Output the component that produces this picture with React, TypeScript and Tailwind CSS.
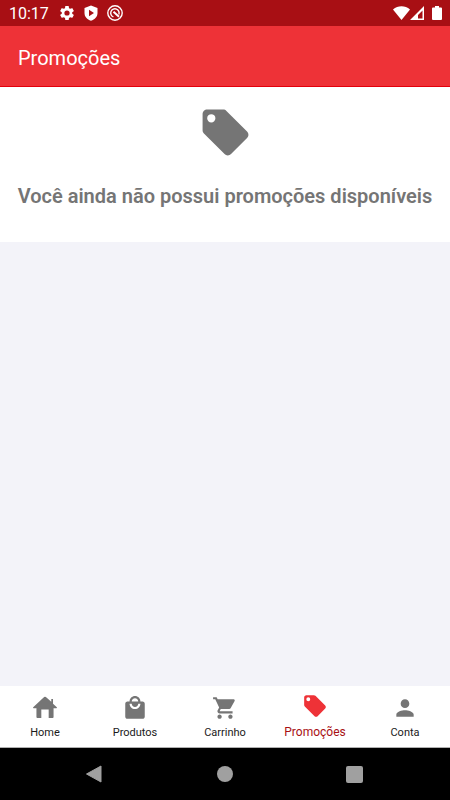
import React from "react";

type IconProps = { className?: string };

const TAG =
  "M21.41 11.58l-9-9C12.05 2.22 11.55 2 11 2H4c-1.1 0-2 .9-2 2v7c0 .55.22 1.05.59 1.42l9 9c.36.36.86.58 1.41.58.55 0 1.05-.22 1.41-.59l7-7c.37-.36.59-.86.59-1.41 0-.55-.23-1.06-.59-1.42zM5.8 7.6a1.800 1.800 0 110-3.600 1.800 1.800 0 010 3.600z";
const BAG =
  "M19 6h-2c0-2.76-2.24-5-5-5S7 3.24 7 6H5c-1.1 0-1.99.9-1.99 2L3 20c0 1.1.9 2 2 2h14c1.1 0 2-.9 2-2V8c0-1.1-.9-2-2-2zm-7-3c1.66 0 3 1.34 3 3H9c0-1.66 1.34-3 3-3zm0 10c-2.76 0-5-2.24-5-5h2c0 1.66 1.34 3 3 3s3-1.34 3-3h2c0 2.76-2.24 5-5 5z";
const CART =
  "M7 18c-1.1 0-1.99.9-1.99 2S5.9 22 7 22s2-.9 2-2-.9-2-2-2zM1 2v2h2l3.6 7.59-1.35 2.45c-.16.28-.25.61-.25.96 0 1.1.9 2 2 2h12v-2H7.42c-.14 0-.25-.11-.25-.25l.03-.12.9-1.63h7.45c.75 0 1.41-.41 1.75-1.03l3.58-6.49A1 1 0 0020 4H5.21l-.94-2H1zm16 16c-1.1 0-1.99.9-1.99 2s.89 2 1.99 2 2-.9 2-2-.9-2-2-2z";
const PERSON =
  "M12 12c2.21 0 4-1.79 4-4s-1.79-4-4-4-4 1.79-4 4 1.79 4 4 4zm0 2c-2.67 0-8 1.34-8 4v2h16v-2c0-2.66-5.33-4-8-4z";
const HOME =
  "M12.800 1.900a1.200 1.200 0 00-1.600 0L1.100 11.400c-.3.3-.1.800.3.800h2.700v8.200c0 .5.3.8.8.8h3.700V13.400h6.800v7.800h3.700c.5 0 .8-.3.8-.8v-8.200h2.700c.4 0 .6-.5.3-.8l-3.500-3.300V3.600h-1.600v2.600z";
const GEAR =
  "M19.14 12.94c.04-.3.06-.61.06-.94 0-.32-.02-.64-.07-.94l2.03-1.58a.49.49 0 00.12-.61l-1.92-3.32a.49.49 0 00-.59-.22l-2.39.96c-.5-.38-1.03-.7-1.62-.94l-.36-2.54a.48.48 0 00-.48-.41h-3.84c-.24 0-.43.17-.47.41l-.36 2.54c-.59.24-1.13.57-1.62.94l-2.39-.96a.48.48 0 00-.59.22L2.74 8.870c-.12.21-.08.47.12.61l2.030 1.580c-.05.3-.09.63-.09.94s.02.64.07.94l-2.030 1.580a.49.49 0 00-.12.61l1.920 3.320c.12.22.37.29.59.22l2.390-.96c.5.38 1.030.7 1.620.94l.36 2.540c.05.24.24.41.48.41h3.840c.24 0 .44-.17.47-.41l.36-2.540c.59-.24 1.130-.56 1.620-.94l2.390.96c.22.08.47 0 .59-.22l1.920-3.320a.49.49 0 00-.12-.61zM12 15.600A3.600 3.600 0 1112 8.400a3.600 3.600 0 010 7.200z";

function Glyph({ d, className }: { d: string } & IconProps) {
  return (
    <svg viewBox="0 0 24 24" fill="currentColor" className={className} aria-hidden="true">
      <path d={d} fillRule="evenodd" />
    </svg>
  );
}

const tabs = [
  { label: "Home", icon: HOME },
  { label: "Produtos", icon: BAG },
  { label: "Carrinho", icon: CART },
  { label: "Promoções", icon: TAG, active: true },
  { label: "Conta", icon: PERSON },
];

function StatusBar() {
  return (
    <div className="flex h-[26px] shrink-0 items-center bg-[#a80f14] pr-2 pl-[9px] text-white">
      <span className="pt-0.5 text-base leading-5">10:17</span>
      <div className="ml-2.5 flex items-center gap-2">
        <svg viewBox="1 1 22 22" className="size-4" fill="currentColor" aria-hidden="true">
          <path d={GEAR} fillRule="evenodd" />
        </svg>
        <svg viewBox="0 0 16 16" className="size-4" aria-hidden="true">
          <path fill="currentColor" fillRule="evenodd" d="M8 0.500L14.500 3v5c0 3.800-2.700 6.500-6.500 7.800C4.200 14.500 1.500 11.800 1.500 8V3zM6 4.800v6.400L11 8z" />
        </svg>
        <svg viewBox="0 0 16 16" className="size-4" fill="none" stroke="currentColor" aria-hidden="true">
          <circle cx="8" cy="8" r="7.200" strokeWidth="1.400" />
          <path d="M11.800 9.600A4.200 4.200 0 1 0 6.400 11.900" strokeWidth="1.400" />
          <path d="M6.500 6.800l5.500 4.900" strokeWidth="2" />
        </svg>
      </div>
      <div className="ml-auto flex items-center gap-1">
        <svg viewBox="0 0 17 14" className="h-3.5 w-[17px]" fill="currentColor" aria-hidden="true">
          <path d="M0 3.500C5 -.7 12 -.7 17 3.500L8.500 14z" />
        </svg>
        <svg viewBox="0 0 14 14" className="-ml-1 size-3.5" fill="currentColor" aria-hidden="true">
          <path fillRule="evenodd" d="M14 0v14H0zM12.500 4.500L8 9v3.500h4.500z" />
        </svg>
        <svg viewBox="0 0 10 14" className="ml-1 h-3.5 w-2.5" fill="currentColor" aria-hidden="true">
          <path d="M3 0h4v1.500h2a1 1 0 0 1 1 1V13a1 1 0 0 1-1 1H1a1 1 0 0 1-1-1V2.500a1 1 0 0 1 1-1h2z" />
        </svg>
      </div>
    </div>
  );
}

function TabBar() {
  return (
    <nav className="grid h-[62px] shrink-0 grid-cols-5 border-b border-[#b0b0b0] bg-white">
      {tabs.map((tab) => (
        <a
          key={tab.label}
          href="#"
          aria-current={tab.active ? "page" : undefined}
          className={
            tab.active
              ? "flex flex-col items-center gap-[5px] pt-[7px] text-xs leading-4 text-[#a80f14]"
              : "flex flex-col items-center gap-1 pt-[9px] text-[11px] leading-4 text-[#1a1a1a]"
          }
        >
          <Glyph d={tab.icon} className={tab.active ? "size-[26px] text-[#ee3237]" : "size-[26px] text-[#757575]"} />
          {tab.label}
        </a>
      ))}
    </nav>
  );
}

function SystemBar() {
  return (
    <div className="flex h-[52px] shrink-0 items-center justify-between bg-black pr-[87px] pl-[85px] text-[#a0a0a0]">
      <button type="button" aria-label="Voltar">
        <svg viewBox="0 0 18 18" className="size-[18px]" fill="currentColor" stroke="currentColor" strokeLinejoin="round" aria-hidden="true">
          <path d="M1.500 9L16 1v16z" />
        </svg>
      </button>
      <button type="button" aria-label="Início" className="size-4 rounded-full bg-current" />
      <button type="button" aria-label="Recentes" className="size-[17px] rounded-xs bg-current" />
    </div>
  );
}

export default function App() {
  return (
    <div className="flex min-h-screen flex-col bg-[#f3f3f9] font-[Roboto,sans-serif]">
      <StatusBar />
      <header className="flex h-[61px] shrink-0 items-center border-b border-[#e3000b] bg-[#ee3237] px-[18px] pt-1">
        <h1 className="text-xl leading-6 text-white">Promoções</h1>
      </header>
      <main className="grow">
        <section className="flex flex-col items-center bg-white pt-[18px] pb-[34px]">
          <Glyph d={TAG} className="size-[55px] text-[#757575]" />
          <p className="mt-6 text-center text-xl leading-6 font-semibold text-[#757575]">
            Você ainda não possui promoções disponíveis
          </p>
        </section>
      </main>
      <TabBar />
      <SystemBar />
    </div>
  );
}
